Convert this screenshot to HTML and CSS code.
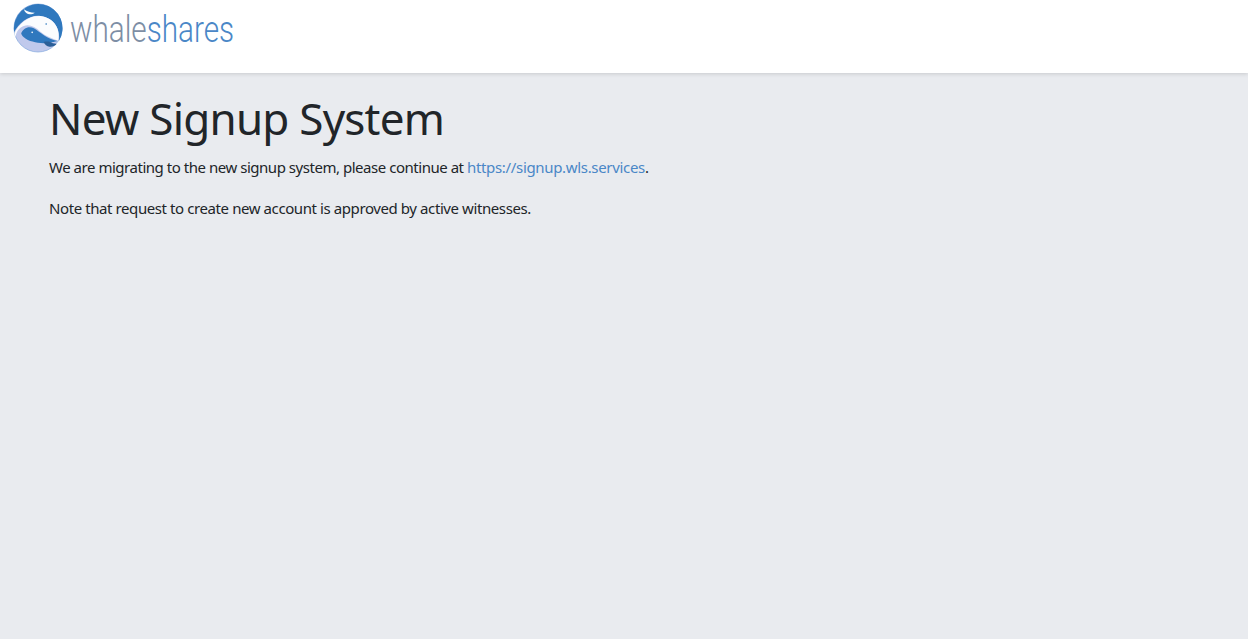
FILE: index.html
```html
<!DOCTYPE html>
<html lang="en">
<head>
<meta charset="utf-8">
<title>New Signup System</title>
<link rel="stylesheet" href="styles.css">
</head>
<body>
<header class="topbar">
  <a class="brand" href="#">
    <svg class="brand-mark" width="50" height="50" viewBox="22.5 9 150 150" aria-hidden="true">
      <circle cx="97.5" cy="84" r="72" fill="#c0c9ec" stroke="#7ea6dc" stroke-width="2"/>
      <path d="M26 96A73 73 0 1 1 160 124C165 90 150 55 105 48 70 44 40 70 26 96Z" fill="#2f78be"/>
      <path d="M27 100C40 70 70 46 105 48 150 55 165 90 158 122 140 115 120 108 105 95 90 80 70 72 55 78 40 84 32 95 30 112Z" fill="#fbfcfe"/>
      <path d="M47 100C52 85 70 76 85 85 105 97 125 118 156 123 140 128 125 128 115 130 90 128 70 125 55 112 50 108 48 104 47 100Z" fill="#2f78be"/>
      <path d="M55 28C65 35 75 38 88 38 76 46 60 45 55 28Z" fill="#fbfcfe"/>
      <path d="M114 126C124 124 134 124 142 130 146 130 150 131 153 132 148 138 140 141 132 140 124 139 118 134 114 126Z" fill="#2b5f98"/>
      <circle cx="122" cy="72" r="2.5" fill="#2f78be"/>
      <circle cx="80" cy="97" r="2.5" fill="#fff"/>
    </svg>
    <span class="wordmark"><span class="word-grey">whale</span><span class="word-blue">shares</span></span>
  </a>
</header>
<main class="content">
  <h1 class="title">New Signup System</h1>
  <p class="text text-lead">We are migrating to the new signup system, please continue at <a class="link" href="#">https://signup.wls.services</a>.</p>
  <p class="text">Note that request to create new account is approved by active witnesses.</p>
</main>
</body>
</html>
```
FILE: styles.css
```css
* { box-sizing: border-box; }
html, body { height: 100%; }
body {
  margin: 0;
  background: #e9ebef;
  color: #212529;
  font-family: "Noto Sans", "Open Sans", sans-serif;
  overflow: hidden;
}
.topbar {
  height: 73px;
  background: #fff;
  box-shadow: 0 1px 4px rgba(0, 0, 0, 0.14);
  padding: 3px 0 0 13px;
}
.brand {
  display: flex;
  align-items: flex-start;
  gap: 7px;
  text-decoration: none;
}
.brand-mark { display: block; flex: none; }
.wordmark {
  display: block;
  font-family: Roboto, sans-serif;
  font-weight: 300;
  font-size: 36px;
  line-height: 54px;
  white-space: nowrap;
  transform: scaleX(0.825);
  transform-origin: left top;
}
.word-grey { color: #7d8ea5; }
.word-blue { color: #4a87c7; }
.content { padding: 17px 49px 0; }
.title {
  margin: 0 0 9px;
  font-size: 44px;
  line-height: 56px;
  font-weight: 400;
  letter-spacing: -0.78px;
}
.text {
  margin: 0 0 16px;
  font-size: 15px;
  line-height: 25px;
  letter-spacing: -0.41px;
}
.text-lead { letter-spacing: -0.47px; }
.link { color: #4a87c7; text-decoration: none; letter-spacing: -0.33px; }
```
